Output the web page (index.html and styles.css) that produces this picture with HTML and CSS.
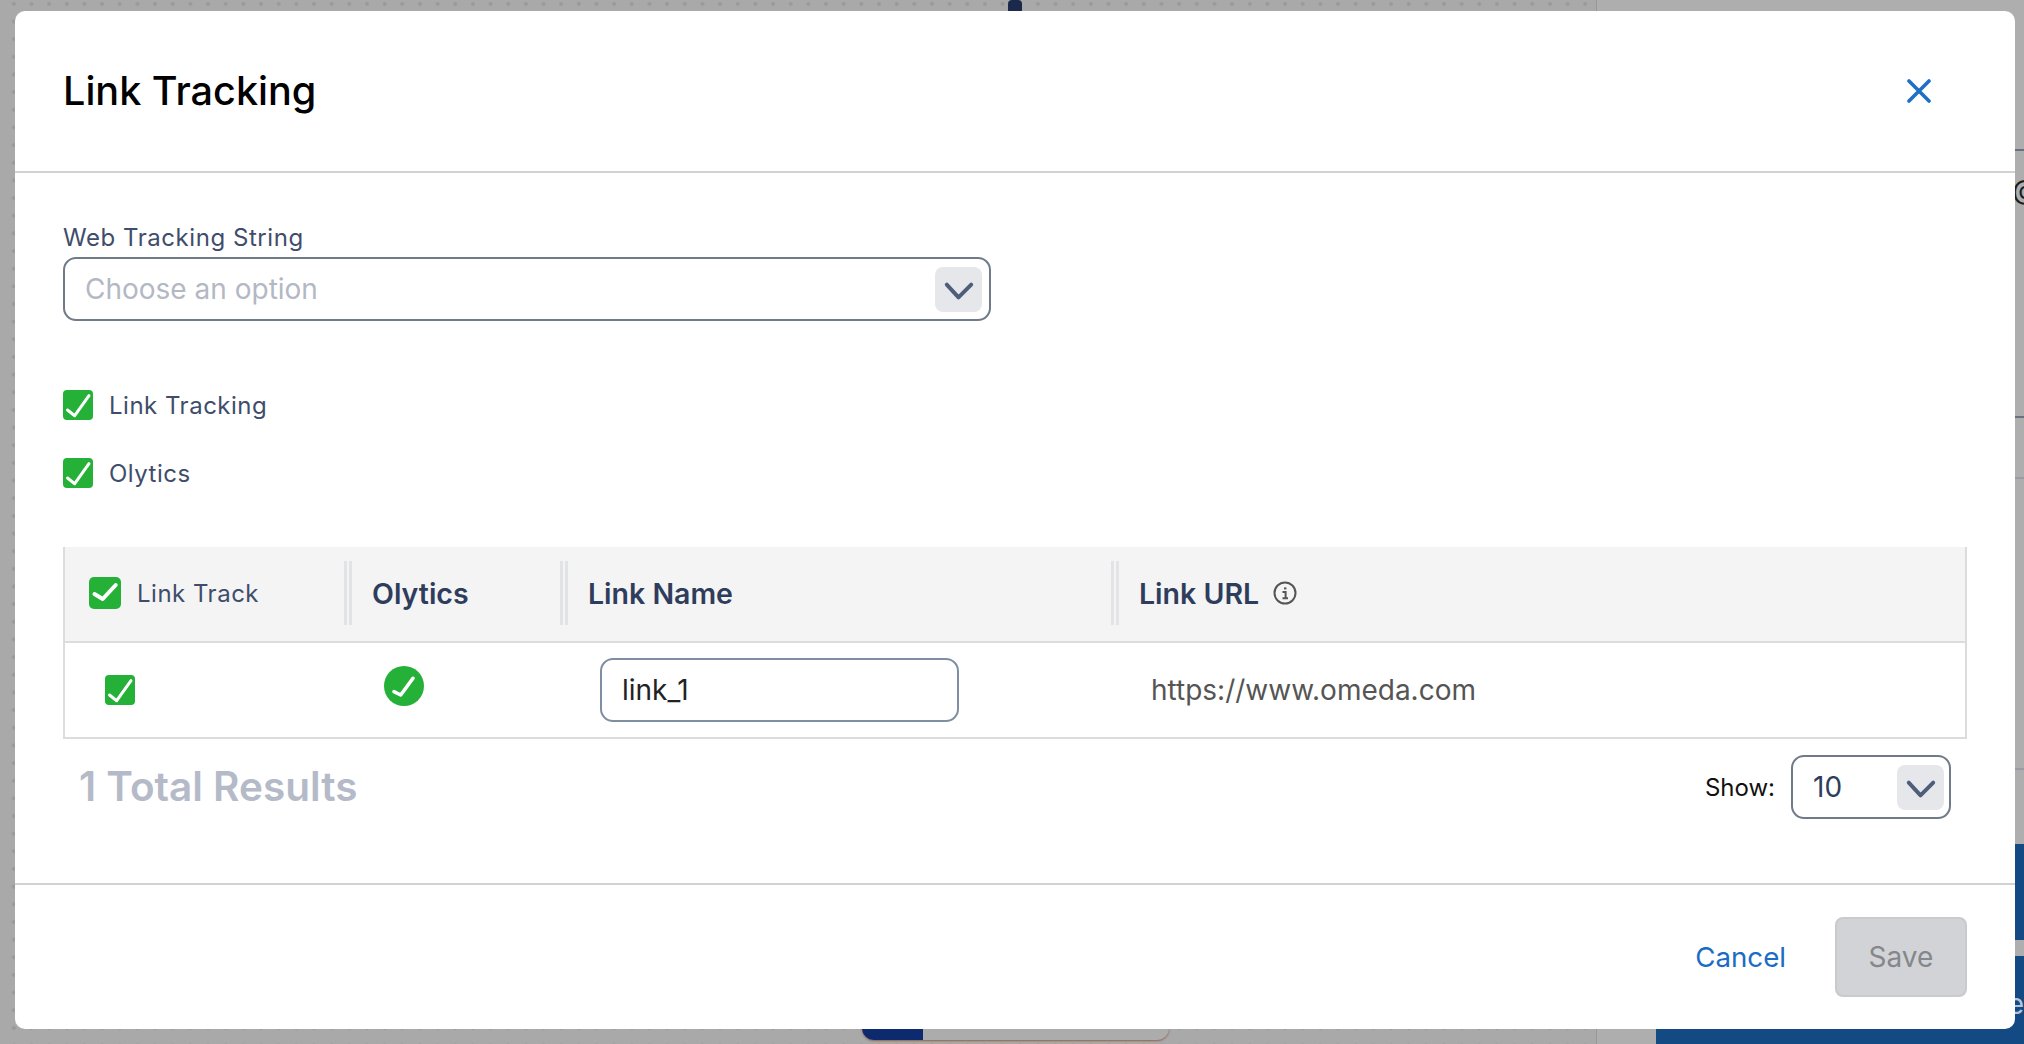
FILE: index.html
```html
<!DOCTYPE html>
<html lang="en">
  <head>
    <meta charset="UTF-8" />
    <title>Link Tracking</title>
    <link rel="stylesheet" href="styles.css">
  </head>
  <body>
    <!-- page under the dialog, only its edges show -->
    <div class="canvas">
      <div class="canvas-pin"></div>
      <div class="canvas-button"><div class="canvas-button-fill"></div></div>
      <div class="side-panel">
        <div class="side-rule rule-1"></div>
        <div class="side-at">@</div>
        <div class="side-rule rule-2"></div>
        <div class="side-rule rule-3"></div>
        <div class="side-rule rule-4"></div>
        <div class="side-blue blue-1"></div>
        <div class="side-blue blue-2">e</div>
      </div>
    </div>

    <div class="overlay">
      <div class="modal">
        <div class="modal-header">
          <h1>Link Tracking</h1>
          <svg class="close-icon" viewBox="0 0 24 24" fill="none" stroke="#1f6fc6" stroke-width="3.6" stroke-linecap="round">
            <path d="M2 2 22 22M22 2 2 22" />
          </svg>
        </div>

        <div class="modal-body">
          <label class="field-label">Web Tracking String</label>
          <div class="select select-wide">
            <span class="placeholder">Choose an option</span>
            <span class="select-arrow">
              <svg viewBox="0 0 46 46" fill="none" stroke="#4e5d79" stroke-width="4" stroke-linecap="round" stroke-linejoin="round">
                <path d="M11 18 23 31 36 18" />
              </svg>
            </span>
          </div>

          <div class="check-row first">
            <svg class="check" viewBox="0 0 30 30"><rect width="30" height="30" rx="4" fill="#25b038" /><path d="M4.5 20 11.7 25.7 26 5.7" fill="none" stroke="#fff" stroke-width="3" stroke-linecap="round" stroke-linejoin="round" /></svg>
            <span>Link Tracking</span>
          </div>
          <div class="check-row">
            <svg class="check" viewBox="0 0 30 30"><rect width="30" height="30" rx="4" fill="#25b038" /><path d="M4.5 20 11.7 25.7 26 5.7" fill="none" stroke="#fff" stroke-width="3" stroke-linecap="round" stroke-linejoin="round" /></svg>
            <span>Olytics</span>
          </div>

          <div class="table">
            <div class="table-head">
              <div class="head-cell head-first">
                <svg class="check-head" viewBox="0 0 32 32"><rect width="32" height="32" rx="5" fill="#25b038" /><path d="M5.5 17 13.7 22 26.7 8" fill="none" stroke="#fff" stroke-width="4" stroke-linecap="round" stroke-linejoin="round" /></svg>
                <span class="head-light">Link Track</span>
              </div>
              <div class="head-cell"><span class="head-inner">Olytics</span></div>
              <div class="head-cell"><span class="head-inner">Link Name</span></div>
              <div class="head-cell">
                <span class="head-inner">Link URL
                  <svg class="info-icon" viewBox="0 0 24 24" fill="none" stroke="#555" stroke-width="2">
                    <circle cx="12" cy="12" r="10.5" />
                    <path d="M9.5 11H12.6V17M9.5 17.2H15" />
                    <path d="M12.2 6.4V8.4" stroke-width="2.4" />
                  </svg>
                </span>
              </div>
            </div>
            <div class="table-row">
              <div class="cell cell-check">
                <svg class="check" viewBox="0 0 30 30"><rect width="30" height="30" rx="4" fill="#25b038" /><path d="M4.5 20 11.7 25.7 26 5.7" fill="none" stroke="#fff" stroke-width="3" stroke-linecap="round" stroke-linejoin="round" /></svg>
              </div>
              <div class="cell cell-status">
                <svg class="status-icon" viewBox="0 0 40 40"><circle cx="20" cy="20" r="20" fill="#25b038" /><path d="M10 25.6 16.7 29 29 12.3" fill="none" stroke="#fff" stroke-width="3.6" stroke-linecap="round" stroke-linejoin="round" /></svg>
              </div>
              <div class="cell cell-name"><div class="name-input">link_1</div></div>
              <div class="cell cell-url">https://www.omeda.com</div>
            </div>
          </div>

          <div class="table-footer">
            <div class="total">1 Total Results</div>
            <div class="show">
              <span>Show:</span>
              <div class="select select-small">
                <span class="select-value">10</span>
                <span class="select-arrow">
                  <svg viewBox="0 0 46 46" fill="none" stroke="#4e5d79" stroke-width="4" stroke-linecap="round" stroke-linejoin="round">
                    <path d="M11 18 23 31 36 18" />
                  </svg>
                </span>
              </div>
            </div>
          </div>
        </div>

        <div class="modal-footer">
          <a class="cancel-link">Cancel</a>
          <button class="save-btn" disabled>Save</button>
        </div>
      </div>
    </div>
  </body>
</html>
```

FILE: styles.css
```css
* {
  box-sizing: border-box;
}
html,
body {
  margin: 0;
  height: 100%;
}
body {
  width: 2024px;
  height: 1044px;
  overflow: hidden;
  position: relative;
  font-family: Inter, "Noto Sans", sans-serif;
  background: #a9a9a9;
}

/* page behind the dialog */
.canvas {
  position: absolute;
  inset: 0;
  background-color: #a9a9a9;
  background-image: radial-gradient(circle, #999a9c 1.6px, transparent 2.2px);
  background-size: 17.67px 17.67px;
  background-position: 5px -5px;
}
.canvas-pin {
  position: absolute;
  left: 1008px;
  top: 0;
  width: 14px;
  height: 14px;
  border-radius: 4px;
  background: #1b2a4c;
}
.canvas-button {
  position: absolute;
  left: 862px;
  top: 1000px;
  width: 307px;
  height: 40px;
  border-radius: 0 0 12px 12px;
  background: #acacac;
  box-shadow: 0 1px 2px #94634f;
  overflow: hidden;
}
.canvas-button-fill {
  width: 61px;
  height: 100%;
  background: #0e2a6e;
}
.side-panel {
  position: absolute;
  left: 1596px;
  top: 0;
  right: 0;
  bottom: 0;
  background: #aeaeae;
  border-left: 1px solid #989898;
}
.side-rule {
  position: absolute;
  left: 0;
  right: 0;
  height: 2px;
  background: #6a707c;
}
.rule-1 {
  top: 149px;
}
.rule-2 {
  top: 416px;
}
.rule-3 {
  top: 477px;
  background: #9a9ca1;
}
.rule-4 {
  top: 768px;
  background: #9a9ca1;
}
.side-at {
  position: absolute;
  left: 415px;
  top: 172px;
  font-size: 28px;
  line-height: 36px;
  color: #1c1c1c;
}
.side-blue {
  position: absolute;
  left: 59px;
  right: 0;
  background: #134a83;
}
.blue-1 {
  top: 844px;
  height: 96px;
}
.blue-2 {
  top: 956px;
  bottom: 0;
  color: #b8c4d4;
  font-size: 28px;
  line-height: 96px;
  text-align: right;
}

/* dialog */
.overlay {
  position: absolute;
  inset: 0;
  padding: 11px 9px 15px 15px;
}
.modal {
  height: 1018px;
  background: #fff;
  border-radius: 10px;
  display: flex;
  flex-direction: column;
}
.modal-header {
  height: 162px;
  flex: none;
  padding: 0 84px 0 48px;
  border-bottom: 2px solid #d2d2d2;
  display: flex;
  align-items: center;
  justify-content: space-between;
}
.modal-header h1 {
  margin: 0;
  font-size: 39.6px;
  font-weight: 500;
  color: #000;
}
.close-icon {
  width: 24px;
  height: 24px;
}
.modal-body {
  flex: 1;
  padding: 50px 48px 0;
}
.field-label {
  display: block;
  font-size: 24px;
  line-height: 30px;
  color: #3f4d6b;
  margin-bottom: 4px;
  letter-spacing: 0.55px;
}
.select {
  display: flex;
  align-items: center;
  justify-content: space-between;
  height: 64px;
  border: 2px solid #707a89;
  border-radius: 13px;
  padding: 0 7px 0 20px;
  font-size: 28px;
}
.select-wide {
  width: 928px;
}
.placeholder {
  color: #b3b8c4;
}
.select-arrow {
  width: 47px;
  height: 45px;
  border-radius: 8px;
  background: #e6e7ea;
}
.select-arrow svg {
  display: block;
  width: 47px;
  height: 45px;
}
.check-row {
  display: flex;
  align-items: center;
  gap: 16px;
  height: 30px;
  margin-top: 38px;
  font-size: 24px;
  color: #3f4d6b;
  letter-spacing: 0.5px;
}
.check-row.first {
  margin-top: 69px;
}
.check {
  width: 30px;
  height: 30px;
  flex: none;
  display: block;
}
.check-head {
  width: 32px;
  height: 32px;
  flex: none;
}

/* table */
.table {
  margin-top: 59px;
  border-left: 2px solid #dcdcdc;
  border-right: 2px solid #dcdcdc;
  border-bottom: 2px solid #dcdcdc;
}
.table-head,
.table-row {
  display: grid;
  grid-template-columns: 279px 216px 551px 1fr;
}
.table-head {
  height: 96px;
  background: #f4f4f4;
  border-bottom: 2px solid #dcdcdc;
  align-items: center;
  padding-bottom: 2px;
}
.head-cell {
  font-size: 28.5px;
  font-weight: 600;
  color: #2f3d5c;
}
.head-first {
  display: flex;
  align-items: center;
  gap: 16px;
  padding-left: 24px;
}
.head-light {
  font-size: 24px;
  font-weight: 400;
  color: #3f4d6b;
  letter-spacing: 0.5px;
}
.head-inner {
  display: flex;
  align-items: center;
  gap: 14px;
  height: 64px;
  padding-left: 20px;
  border-left: 8px double #e2e3e5;
}
.info-icon {
  width: 24px;
  height: 24px;
}
.table-row {
  height: 94px;
  align-items: center;
}
.cell-check {
  padding-left: 40px;
}
.cell-status {
  padding-left: 40px;
  padding-bottom: 8px;
}
.status-icon {
  display: block;
  width: 40px;
  height: 40px;
}
.cell-name {
  padding-left: 40px;
}
.name-input {
  width: 359px;
  height: 64px;
  border: 2px solid #7f8ea3;
  border-radius: 13px;
  padding: 0 20px;
  font-size: 28px;
  line-height: 60px;
  color: #222;
}
.cell-url {
  padding-left: 40px;
  font-size: 28px;
  color: #555;
}
.table-footer {
  display: flex;
  align-items: center;
  justify-content: space-between;
  margin-top: 16px;
  padding: 0 16px;
}
.total {
  font-size: 40.5px;
  font-weight: 600;
  color: #b5bac8;
  padding-bottom: 2px;
}
.show {
  display: flex;
  align-items: center;
  gap: 16px;
  font-size: 24px;
  color: #111;
}
.select-small {
  width: 160px;
  padding: 0 5px 0 20px;
}
.select-value {
  color: #2f3d5c;
}
.modal-footer {
  height: 146px;
  flex: none;
  border-top: 2px solid #d2d2d2;
  display: flex;
  align-items: center;
  justify-content: flex-end;
  gap: 49px;
  padding: 0 48px 0 0;
}
.cancel-link {
  font-size: 27.7px;
  color: #1a6cc4;
}
.save-btn {
  width: 132px;
  height: 80px;
  border: 2px solid #c8cacd;
  border-radius: 8px;
  background: #d1d3d7;
  font-family: inherit;
  font-size: 28px;
  color: #85878a;
}
```
